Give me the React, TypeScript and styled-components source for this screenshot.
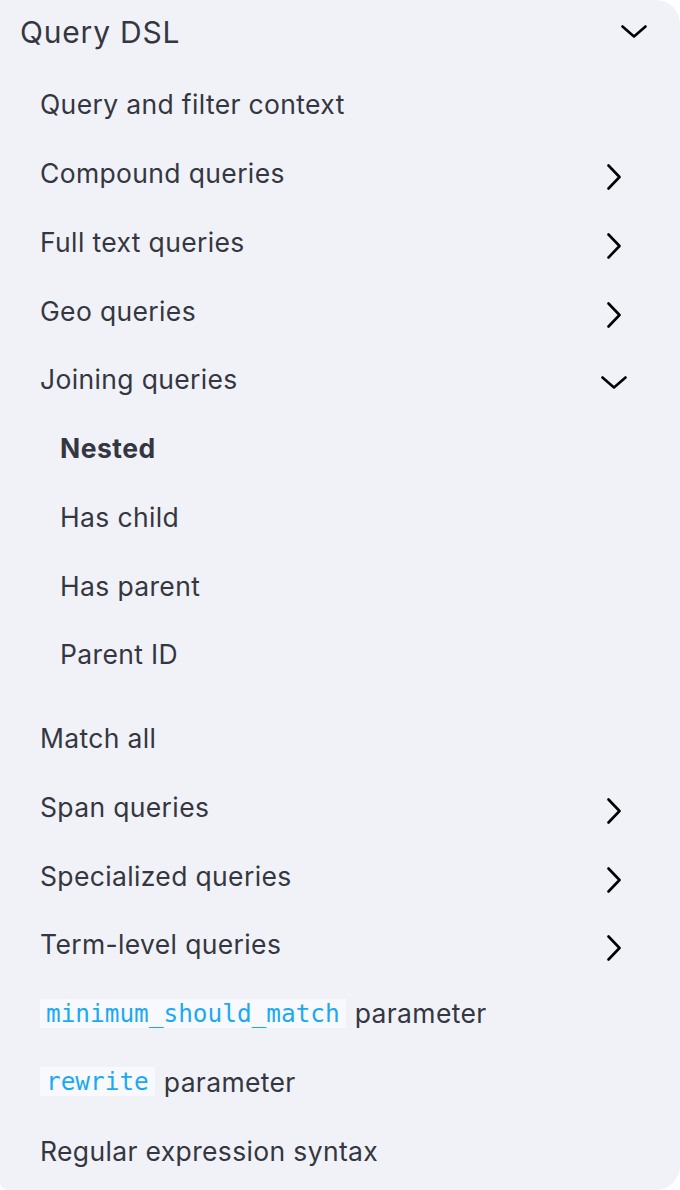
import React from "react";
import styled, { createGlobalStyle } from "styled-components";

const Global = createGlobalStyle`
  html, body { margin: 0; padding: 0; background: #ffffff; }
  body { font-family: Inter, "Noto Sans", sans-serif; }
`;

const Panel = styled.nav`
  width: 680px;
  height: 1190px;
  box-sizing: border-box;
  background: #f1f2f7;
  border-radius: 0 24px 24px 8px;
  color: #343741;
  overflow: hidden;
`;

const Heading = styled.div`
  height: 64px;
  display: flex;
  align-items: center;
  justify-content: space-between;
  padding: 0 33px 0 20px;
  font-size: 30px;
  font-weight: 400;
  letter-spacing: 0.8px;
`;

const List = styled.ul<{ $gapAfter?: number }>`
  list-style: none;
  margin: 0 0 ${(p) => p.$gapAfter ?? 0}px 0;
  padding: 0;
`;

const TopList = styled(List)`
  margin-top: 6px;
`;

const Row = styled.li<{ $level: number; $bold?: boolean; $padRight: number }>`
  height: 68.75px;
  display: flex;
  align-items: center;
  justify-content: space-between;
  padding: 0 ${(p) => p.$padRight}px 0 ${(p) => 20 + p.$level * 20}px;
  font-size: 26.5px;
  font-weight: ${(p) => (p.$bold ? 700 : 400)};
  letter-spacing: ${(p) => (p.$bold ? 0.5 : 0.35)}px;
  white-space: nowrap;
`;

const Label = styled.span`
  display: inline-flex;
  align-items: center;
`;

const Code = styled.code`
  font-family: "DejaVu Sans Mono", "Liberation Mono", monospace;
  font-size: 24.4px;
  letter-spacing: 0;
  color: #1ba9f5;
  background: #f8f9fc;
  padding: 0 6px;
  line-height: 29px;
  margin-right: 9px;
`;

const ChevronSvg = styled.svg<{ $shift: number }>`
  display: block;
  flex: none;
  margin-top: ${(p) => p.$shift}px;
`;

const ChevronRight = () => (
  <ChevronSvg $shift={8} width="14" height="26" viewBox="0 0 14 26" fill="none">
    <polyline points="1.5,1.5 12.5,13 1.5,24.5" stroke="#000" strokeWidth="2.6" strokeLinecap="round" strokeLinejoin="round" />
  </ChevronSvg>
);

const ChevronDown = ({ shift }: { shift: number }) => (
  <ChevronSvg $shift={shift} width="26" height="13" viewBox="0 0 26 13" fill="none">
    <polyline points="1.5,1.5 13,11.5 24.5,1.5" stroke="#000" strokeWidth="2.6" strokeLinecap="round" strokeLinejoin="round" />
  </ChevronSvg>
);

type Item = { label: React.ReactNode; icon?: "right" | "down" };

const before: Item[] = [
  { label: "Query and filter context" },
  { label: "Compound queries", icon: "right" },
  { label: "Full text queries", icon: "right" },
  { label: "Geo queries", icon: "right" },
  { label: "Joining queries", icon: "down" },
];

const nested = ["Nested", "Has child", "Has parent", "Parent ID"];

const after: Item[] = [
  { label: "Match all" },
  { label: "Span queries", icon: "right" },
  { label: "Specialized queries", icon: "right" },
  { label: "Term-level queries", icon: "right" },
  {
    label: (
      <>
        <Code>minimum_should_match</Code>parameter
      </>
    ),
  },
  {
    label: (
      <>
        <Code>rewrite</Code>parameter
      </>
    ),
  },
  { label: "Regular expression syntax" },
];

const renderItem = (it: Item, i: number) => (
  <Row key={i} $level={1} $padRight={it.icon === "down" ? 53 : 59}>
    <Label>{it.label}</Label>
    {it.icon === "right" && <ChevronRight />}
    {it.icon === "down" && <ChevronDown shift={6} />}
  </Row>
);

export default function App() {
  return (
    <>
      <Global />
      <Panel>
        <Heading>
          <span>Query DSL</span>
          <ChevronDown shift={-1} />
        </Heading>
        <TopList>{before.map(renderItem)}</TopList>
        <List $gapAfter={15}>
          {nested.map((n, i) => (
            <Row key={n} $level={2} $bold={i === 0} $padRight={59}>
              <Label>{n}</Label>
            </Row>
          ))}
        </List>
        <List>{after.map(renderItem)}</List>
      </Panel>
    </>
  );
}
